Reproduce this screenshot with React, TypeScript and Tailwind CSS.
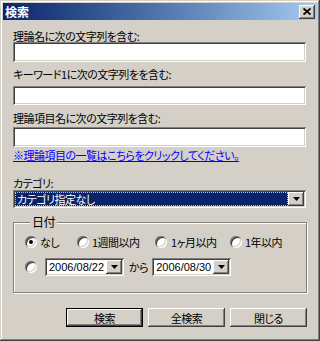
const raised =
  "shadow-[inset_-1px_-1px_#404040,inset_1px_1px_#ffffff,inset_-2px_-2px_#808080,inset_2px_2px_#d4d0c8]";
const sunken =
  "shadow-[inset_1px_1px_#808080,inset_-1px_-1px_#ffffff,inset_2px_2px_#404040,inset_-2px_-2px_#d4d0c8]";

function Arrow() {
  return (
    <div className={`w-[16px] h-full bg-[#d4d0c8] flex items-center justify-center ${raised}`}>
      <svg width="7" height="4" viewBox="0 0 7 4">
        <path d="M0 0h7L3.5 4z" fill="#000" />
      </svg>
    </div>
  );
}

function Radio({ checked }: { checked?: boolean }) {
  return (
    <span className={`w-[12px] h-[12px] shrink-0 rounded-full bg-white flex items-center justify-center ${sunken}`}>
      {checked && <span className="w-[4px] h-[4px] rounded-full bg-black" />}
    </span>
  );
}

function TextBox({ h }: { h: string }) {
  return <div className={`w-[293px] bg-white ${h} ${sunken}`} />;
}

function DateBox({ value }: { value: string }) {
  return (
    <div className={`w-[79px] h-[18px] bg-white flex p-[2px] ${sunken}`}>
      <span className="flex-1 pl-[2px] text-[11px] leading-[14px] tracking-normal font-['Liberation_Sans',sans-serif]">{value}</span>
      <Arrow />
    </div>
  );
}

function Btn({ label, def }: { label: string; def?: boolean }) {
  return (
    <div className={`w-[77px] h-[19px] ${def ? "border border-black" : ""}`}>
      <div className={`w-full h-full bg-[#d4d0c8] flex items-center justify-center ${raised}`}>
        {label}
      </div>
    </div>
  );
}

export default function App() {
  return (
    <div
      className={`w-[320px] h-[341px] bg-[#d4d0c8] p-[3px] flex flex-col text-black text-[11px] leading-[12px] tracking-[-0.5px] [font-feature-settings:'palt'] font-['Noto_Sans_CJK_JP',sans-serif] shadow-[inset_-1px_-1px_#404040,inset_1px_1px_#d4d0c8,inset_-2px_-2px_#808080,inset_2px_2px_#ffffff]`}
    >
      {/* title bar */}
      <div className="h-[17px] shrink-0 flex items-center justify-between pl-[2px] pr-[2px] bg-linear-to-r from-[#0a246a] to-[#a6caf0]">
        <span className="text-white font-bold text-[12px] tracking-normal">検索</span>
        <div className={`w-[16px] h-[14px] bg-[#d4d0c8] flex items-center justify-center ${raised}`}>
          <svg width="8" height="7" viewBox="0 0 8 7">
            <path d="M0.5 0.5L7.5 6.5M7.5 0.5L0.5 6.5" stroke="#000" strokeWidth="1.8" />
          </svg>
        </div>
      </div>

      <div className="flex flex-col pl-[10px]">
        <div className="mt-[10px] h-[12px]">理論名に次の文字列を含む:</div>
        <TextBox h="h-[20px]" />
        <div className="mt-[6px] h-[12px]">キーワード1に次の文字列をを含む:</div>
        <div className="mt-[6px]">
          <TextBox h="h-[19px]" />
        </div>
        <div className="mt-[7px] h-[12px]">理論項目名に次の文字列を含む:</div>
        <div className="mt-[3px]">
          <TextBox h="h-[20px]" />
        </div>
        <div className="mt-[2px] h-[12px] text-[#0000ff] underline">
          ※理論項目の一覧はこちらをクリックしてください。
        </div>
        <div className="mt-[16px] h-[12px]">カテゴリ:</div>

        {/* select */}
        <div className={`mt-[1px] w-[293px] h-[18px] bg-white flex p-[2px] ${sunken}`}>
          <div className="flex-1 bg-[#0a246a] text-white outline-1 outline-dotted outline-offset-[-1px] outline-[#a6caf0] pl-[2px] flex items-center">
            カテゴリ指定なし
          </div>
          <Arrow />
        </div>

        {/* date group */}
        <fieldset className="mt-[8px] w-[294px] border border-[#808080] shadow-[inset_1px_1px_#ffffff,1px_1px_#ffffff] pl-[11px] pb-[16px]">
          <legend className="ml-[5px] px-[2px] bg-[#d4d0c8] leading-[12px] text-[12px]">日付</legend>
          <div className="mt-[7px] flex items-center h-[14px]">
            <div className="w-[52px] flex items-center gap-[3px]">
              <Radio checked />
              <span>なし</span>
            </div>
            <div className="w-[78px] flex items-center gap-[3px]">
              <Radio />
              <span>1週間以内</span>
            </div>
            <div className="w-[75px] flex items-center gap-[4px]">
              <Radio />
              <span>1ヶ月以内</span>
            </div>
            <div className="flex items-center gap-[3px]">
              <Radio />
              <span>1年以内</span>
            </div>
          </div>
          <div className="mt-[9px] flex items-center">
            <Radio />
            <div className="ml-[8px]">
              <DateBox value="2006/08/22" />
            </div>
            <span className="ml-[5px] mr-[4px]">から</span>
            <DateBox value="2006/08/30" />
          </div>
        </fieldset>

        {/* buttons */}
        <div className="mt-[15px] w-[294px] flex justify-end gap-[5px]">
          <Btn label="検索" def />
          <Btn label="全検索" />
          <Btn label="閉じる" />
        </div>
      </div>
    </div>
  );
}
